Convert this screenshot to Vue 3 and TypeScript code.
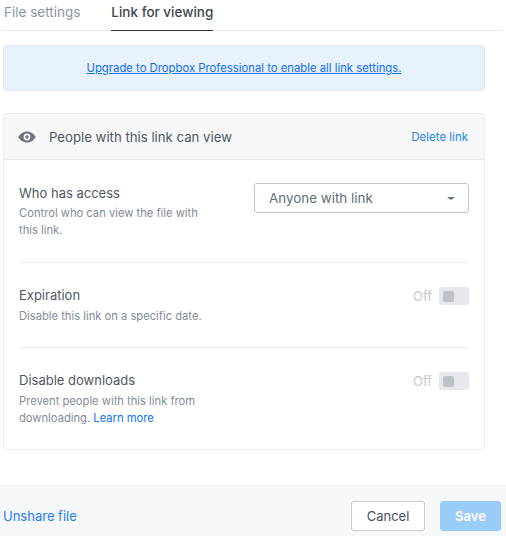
<script setup lang="ts">
interface Row { title: string; desc: string; learn?: boolean }
const toggles: Row[] = [
  { title: 'Expiration', desc: 'Disable this link on a specific date.' },
  { title: 'Disable downloads', desc: 'Prevent people with this link from downloading.', learn: true },
]
</script>

<template>
  <div class="page">
    <nav class="tabs">
      <span class="tab">File settings</span>
      <span class="tab active">Link for viewing</span>
    </nav>
    <div class="banner"><a class="upgrade">Upgrade to Dropbox Professional to enable all link settings.</a></div>
    <section class="card">
      <header class="card-head">
        <svg class="eye" width="18" height="12" viewBox="0 0 18 12">
          <path fill-rule="evenodd" fill="#6b7480" d="M9 0.5C5 0.5 1.9 3 0.3 6 1.9 9 5 11.5 9 11.5S16.1 9 17.7 6C16.1 3 13 0.5 9 0.5ZM9 2.6A3.4 3.4 0 1 1 9 9.4 3.4 3.4 0 0 1 9 2.6ZM9 4.3A1.7 1.7 0 1 0 9 7.7 1.7 1.7 0 0 0 9 4.3Z"/>
        </svg>
        <span class="head-text">People with this link can view</span>
        <a class="delete">Delete link</a>
      </header>
      <div class="rows">
        <div class="row access">
          <div class="info">
            <div class="title">Who has access</div>
            <div class="desc">Control who can view the file with this link.</div>
          </div>
          <div class="select">
            <span>Anyone with link</span>
            <i class="caret"></i>
          </div>
        </div>
        <div v-for="r in toggles" :key="r.title" class="row">
          <div class="info">
            <div class="title">{{ r.title }}</div>
            <div class="desc">{{ r.desc }}<template v-if="r.learn">{{ ' ' }}<a class="learn">Learn more</a></template></div>
          </div>
          <div class="toggle-wrap">
            <span class="off">Off</span>
            <span class="toggle"><i class="knob"></i></span>
          </div>
        </div>
      </div>
    </section>
    <footer class="foot">
      <a class="unshare">Unshare file</a>
      <div class="btns">
        <button class="btn cancel">Cancel</button>
        <button class="btn save">Save</button>
      </div>
    </footer>
  </div>
</template>

<style>
html, body { background: #fff; }
</style>

<style scoped>
.page {
  width: 506px;
  height: 541px;
  font-family: Inter, "Liberation Sans", sans-serif;
  color: #1e1919;
  display: flex;
  flex-direction: column;
  overflow: hidden;
}
a { cursor: pointer; }
.tabs {
  margin: 0 4px 0 2px;
  height: 31px;
  box-sizing: border-box;
  border-bottom: 1px solid #e6e8eb;
  display: flex;
  gap: 31px;
  padding-left: 2px;
  font-size: 13.5px;
}
.tab { height: 31px; box-sizing: border-box; padding-top: 4px; line-height: 17px; color: #8c96a1; white-space: nowrap; }
.tab.active { color: #3d464d; font-weight: 500; border-bottom: 1px solid #2b323a; }
.banner {
  margin: 14px 21px 0 3px;
  height: 46px;
  box-sizing: border-box;
  background: #e8f2fd;
  border: 1px solid #e0e8f0;
  border-radius: 3px;
  display: flex;
  align-items: center;
  justify-content: center;
  font-size: 11.3px;
}
.upgrade { color: #0f6fec; text-decoration: underline; }
.card {
  margin: 22px 21px 0 3px;
  height: 337px;
  box-sizing: border-box;
  border: 1px solid #eceef0;
  border-radius: 3px;
}
.card-head {
  height: 46px;
  box-sizing: border-box;
  background: #f5f7f8;
  border-bottom: 1px solid #e8eaec;
  display: flex;
  align-items: center;
  padding: 0 16px 0 14px;
}
.eye { margin-right: 13px; flex: none; }
.head-text { font-size: 13.2px; color: #4f5862; flex: 1; }
.delete { font-size: 11.5px; color: #2a84ee; }
.rows { padding: 0 15px; }
.row {
  display: flex;
  justify-content: space-between;
  align-items: flex-start;
  padding-top: 23px;
  border-top: 1px solid #eceef0;
  height: 85px;
  box-sizing: border-box;
}
.row:first-child { border-top: 0; height: 102px; padding-top: 24px; }
.row:last-child { height: 100px; }
.info { width: 196px; }
.title { font-size: 13px; line-height: 18px; color: #4f5862; }
.desc { font-size: 11.2px; line-height: 17px; color: #828c97; margin-top: 4px; }
.access .desc { margin-top: 3px; }
.learn { color: #0f74ee; }
.select {
  width: 215px;
  height: 30px;
  margin-top: -1px;
  box-sizing: border-box;
  border: 1px solid #c1c7cd;
  border-radius: 3px;
  display: flex;
  align-items: center;
  justify-content: space-between;
  padding: 0 13px 0 14px;
  font-size: 13.4px;
  color: #636d77;
}
.caret {
  width: 0;
  height: 0;
  border-left: 4px solid transparent;
  border-right: 4px solid transparent;
  border-top: 3px solid #637282;
}
.toggle-wrap { display: flex; align-items: center; gap: 7px; margin-top: 1px; }
.off { font-size: 13px; color: #c5cad0; }
.toggle {
  width: 30px;
  height: 18px;
  background: #e6e8eb;
  border-radius: 3px;
  display: flex;
  align-items: center;
  padding-left: 4px;
  box-sizing: border-box;
}
.knob { width: 11px; height: 11px; background: #bdc2c9; border-radius: 2px; }
.foot {
  margin-top: 35px;
  height: 51px;
  flex: none;
  box-sizing: border-box;
  background: #f5f7f8;
  border-top: 1px solid #eff1f2;
  display: flex;
  align-items: center;
  justify-content: space-between;
  padding: 10px 5px 0 3px;
}
.unshare { font-size: 13px; color: #1f7def; }
.btns { display: flex; gap: 15px; }
.btn {
  height: 30px;
  box-sizing: border-box;
  border-radius: 3px;
  font-family: inherit;
  font-size: 13px;
  padding: 0;
}
.cancel { width: 74px; background: #fff; border: 1px solid #c9ced3; color: #47505a; }
.save { width: 61px; background: #99ccf6; border: 1px solid #99ccf6; color: #fff; font-weight: 600; }
</style>
